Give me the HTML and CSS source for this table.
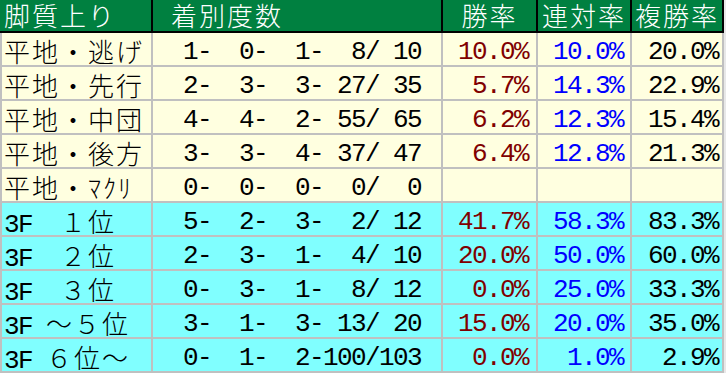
FILE: index.html
```html
<!DOCTYPE html>
<html lang="ja">
<head>
<meta charset="utf-8">
<title>脚質上り</title>
<link rel="stylesheet" href="styles.css">
</head>
<body>
<div class="tbl">
  <div class="row head">
    <div class="hc label">脚質上り</div>
    <div class="hc rec">着別度数</div>
    <div class="hc ctr">勝率</div>
    <div class="hc ctr">連対率</div>
    <div class="hc ctr">複勝率</div>
  </div>
  <div class="row cream">
    <div class="lab">平地・逃げ</div>
    <div class="num recv">1-  0-  1-  8/ 10</div>
    <div class="num win">10.0%</div>
    <div class="num ren">10.0%</div>
    <div class="num fuku">20.0%</div>
  </div>
  <div class="row cream">
    <div class="lab">平地・先行</div>
    <div class="num recv">2-  3-  3- 27/ 35</div>
    <div class="num win">5.7%</div>
    <div class="num ren">14.3%</div>
    <div class="num fuku">22.9%</div>
  </div>
  <div class="row cream">
    <div class="lab">平地・中団</div>
    <div class="num recv">4-  4-  2- 55/ 65</div>
    <div class="num win">6.2%</div>
    <div class="num ren">12.3%</div>
    <div class="num fuku">15.4%</div>
  </div>
  <div class="row cream">
    <div class="lab">平地・後方</div>
    <div class="num recv">3-  3-  4- 37/ 47</div>
    <div class="num win">6.4%</div>
    <div class="num ren">12.8%</div>
    <div class="num fuku">21.3%</div>
  </div>
  <div class="row cream">
    <div class="lab">平地・ﾏｸﾘ</div>
    <div class="num recv">0-  0-  0-  0/  0</div>
    <div class="num win"></div>
    <div class="num ren"></div>
    <div class="num fuku"></div>
  </div>
  <div class="row cyan">
    <div class="lab"><span class="h">3F</span>　１位</div>
    <div class="num recv">5-  2-  3-  2/ 12</div>
    <div class="num win">41.7%</div>
    <div class="num ren">58.3%</div>
    <div class="num fuku">83.3%</div>
  </div>
  <div class="row cyan">
    <div class="lab"><span class="h">3F</span>　２位</div>
    <div class="num recv">2-  3-  1-  4/ 10</div>
    <div class="num win">20.0%</div>
    <div class="num ren">50.0%</div>
    <div class="num fuku">60.0%</div>
  </div>
  <div class="row cyan">
    <div class="lab"><span class="h">3F</span>　３位</div>
    <div class="num recv">0-  3-  1-  8/ 12</div>
    <div class="num win">0.0%</div>
    <div class="num ren">25.0%</div>
    <div class="num fuku">33.3%</div>
  </div>
  <div class="row cyan">
    <div class="lab"><span class="h">3F </span>～５位</div>
    <div class="num recv">3-  1-  3- 13/ 20</div>
    <div class="num win">15.0%</div>
    <div class="num ren">20.0%</div>
    <div class="num fuku">35.0%</div>
  </div>
  <div class="row cyan">
    <div class="lab"><span class="h">3F </span>６位～</div>
    <div class="num recv">0-  1-  2-100/103</div>
    <div class="num win">0.0%</div>
    <div class="num ren">1.0%</div>
    <div class="num fuku">2.9%</div>
  </div>
</div>
</body>
</html>
```
FILE: styles.css
```css
html, body {
  margin: 0;
  padding: 0;
}
body {
  background: #e8e8e8;
  width: 726px;
  height: 373px;
}
.tbl {
  width: 724px;
  display: flex;
  flex-direction: column;
}
.row {
  display: grid;
  grid-template-columns: 149px 288px 93px 92px 90px;
  grid-template-rows: 32px;
  column-gap: 2px;
  padding: 0 2px 2px 2px;
  height: 34px;
  box-sizing: border-box;
  background: #c0c0c0;
}
.row.head {
  grid-template-columns: 151px 288px 93px 92px 90px;
  grid-template-rows: 31px;
  padding: 0 2px 2px 0;
  height: 33px;
  background: #000;
}
.hc {
  background: #008040;
  color: #fff;
  font-family: "Noto Sans CJK JP", sans-serif;
  font-weight: 300;
  font-size: 26px;
  letter-spacing: 2px;
  line-height: 29px;
  white-space: pre;
}
.hc.label { padding-left: 4px; }
.hc.rec { padding-left: 18px; }
.hc.ctr { text-align: center; }
.cream > div { background: #ffffe0; }
.cyan > div { background: #80ffff; }
.lab {
  font-family: "Noto Sans CJK JP", sans-serif;
  font-weight: 300;
  font-size: 26px;
  letter-spacing: 2px;
  line-height: 28px;
  padding-top: 4px;
  padding-left: 2px;
  box-sizing: border-box;
  white-space: pre;
  color: #000;
}
.h {
  font-family: "Liberation Mono", monospace;
  font-weight: 400;
  letter-spacing: -1.6px;
}
.num {
  font-family: "Liberation Mono", monospace;
  font-size: 26px;
  letter-spacing: -1.6px;
  line-height: 26px;
  padding-top: 6px;
  box-sizing: border-box;
  white-space: pre;
  text-align: right;
}
.recv { padding-right: 20px; color: #000; }
.win { padding-right: 8px; color: #800000; }
.ren { padding-right: 7px; color: #0000ff; }
.fuku { padding-right: 4px; color: #000; }
```
